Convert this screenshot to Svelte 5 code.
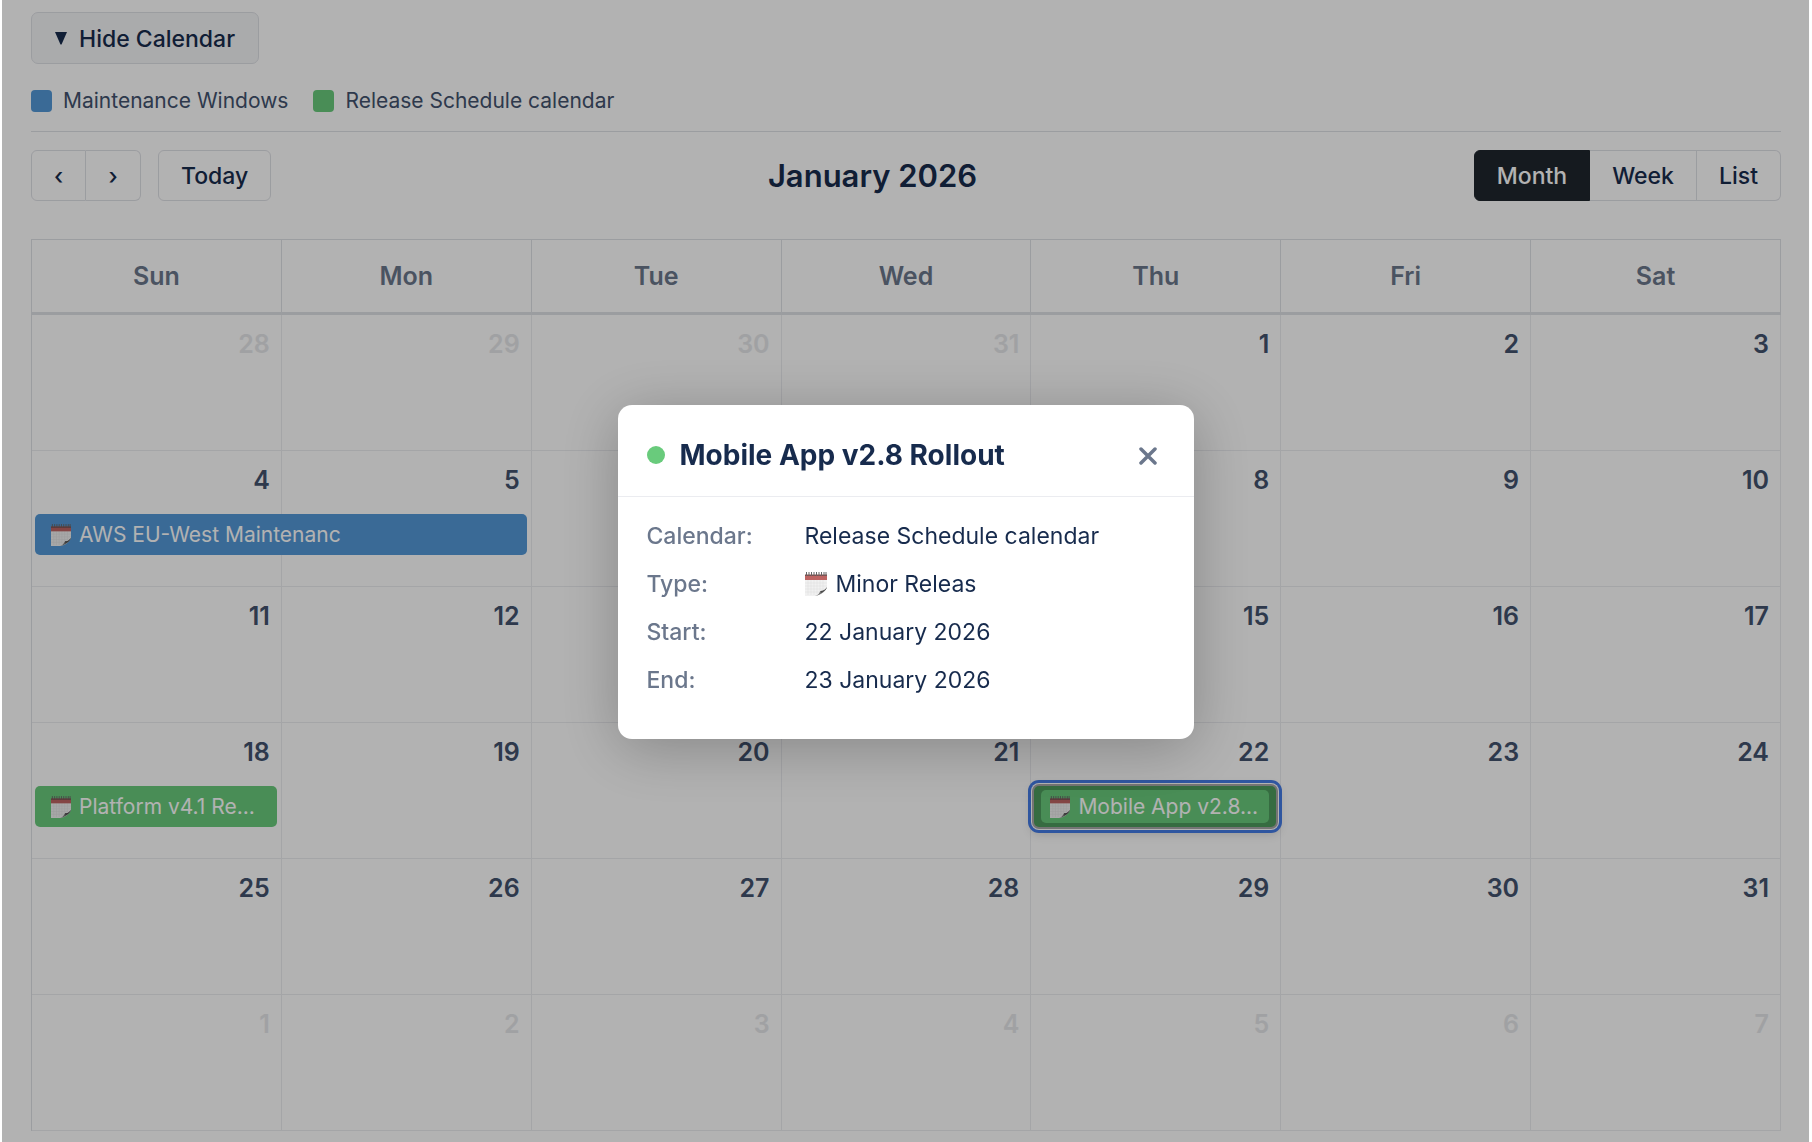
<script>
  const days = ['Sun', 'Mon', 'Tue', 'Wed', 'Thu', 'Fri', 'Sat'];
  const weeks = Array.from({ length: 6 }, (_, w) =>
    Array.from({ length: 7 }, (_, d) => {
      const date = new Date(2025, 11, 28 + w * 7 + d);
      return { n: date.getDate(), other: date.getMonth() !== 0 };
    })
  );
  const events = {
    '1-0': { title: 'AWS EU-West Maintenanc', kind: 'blue wide' },
    '3-0': { title: 'Platform v4.1 Re...', kind: 'green' },
    '3-4': { title: 'Mobile App v2.8...', kind: 'focused' }
  };
  const views = ['Month', 'Week', 'List'];
  const details = [
    ['Calendar:', 'Release Schedule calendar'],
    ['Type:', 'Minor Releas'],
    ['Start:', '22 January 2026'],
    ['End:', '23 January 2026']
  ];
</script>

{#snippet notepad()}
  <svg class="notepad" viewBox="0 0 22 24" aria-hidden="true">
    <path d="M0 3h22v12c-1 4-6 8-11 9H0z" fill="#f1f1f1" />
    <path d="M3 8v15M6 8v15M9 8v15M12 8v14M15 8v12M18 8v10M0 11h22M0 14h22M0 17h19M0 20h16" stroke="#e0e0e0" stroke-width=".6" />
    <path d="M10 24c4-1 4-3 5.500-5 3 0 5-1.500 6.500-4-.5 2-2 4-4 5.500C15.500 22.500 13 23.500 10 24z" fill="#777" />
    <path d="M15.500 19c3 0 5-1.500 6.500-4-1 3-3 4.500-6 6z" fill="#4a4a4a" />
    <path d="M0 3h22v5H0z" fill="#bd6462" />
    <path d="M0 2.500h22v1.500H0z" fill="#844a49" />
    <path d="M1.500 0v4M4 0v4M6.500 0v4M9 0v4M11.500 0v4M14 0v4M16.500 0v4M19 0v4M21 0v4" stroke="#666" stroke-width="1" />
  </svg>
{/snippet}

<main>
  <button class="toggle" type="button">
    <svg class="tri" viewBox="0 0 12 13" aria-hidden="true"><path d="M0 0h12L6.500 12.500h-1z" fill="currentColor" /></svg>
    Hide Calendar
  </button>

  <div class="legend">
    <span class="key"><i class="swatch blue"></i>Maintenance Windows</span>
    <span class="key"><i class="swatch green"></i>Release Schedule calendar</span>
  </div>

  <div class="toolbar">
    <div class="left">
      <div class="group">
        <button class="arrow" type="button" aria-label="Previous month">‹</button>
        <button class="arrow" type="button" aria-label="Next month">›</button>
      </div>
      <div class="group"><button type="button">Today</button></div>
    </div>
    <h1>January 2026</h1>
    <div class="group views">
      {#each views as v, i}
        <button type="button" class:active={i === 0}>{v}</button>
      {/each}
    </div>
  </div>

  <table>
    <thead>
      <tr>{#each days as d}<th scope="col">{d}</th>{/each}</tr>
    </thead>
    <tbody>
      {#each weeks as week, w}
        <tr>
          {#each week as day, d}
            {@const ev = events[`${w}-${d}`]}
            <td>
              <div class="num" class:other={day.other}>{day.n}</div>
              {#if ev}
                <button type="button" class="event {ev.kind}">
                  <span class="inner">{@render notepad()}<span>{ev.title}</span></span>
                </button>
              {/if}
            </td>
          {/each}
        </tr>
      {/each}
    </tbody>
  </table>
</main>

<div class="overlay">
  <div class="dialog" role="dialog" aria-modal="true" aria-labelledby="dialog-title">
    <header>
      <i class="dot"></i>
      <h2 id="dialog-title">Mobile App v2.8 Rollout</h2>
      <button class="close" type="button" aria-label="Close">
        <svg viewBox="0 0 18 18" aria-hidden="true"><path d="M2 2l14 14M16 2L2 16" stroke="currentColor" stroke-width="3.500" stroke-linecap="round" /></svg>
      </button>
    </header>
    <dl>
      {#each details as [label, value], i}
        <dt>{label}</dt>
        <dd>{#if i === 1}{@render notepad()}{/if}{value}</dd>
      {/each}
    </dl>
  </div>
</div>

<style>
  :global(body) {
    background: #fff;
    font-family: Inter, 'Liberation Sans', sans-serif;
    color: #172b4d;
    overflow: hidden;
  }
  main {
    padding: 12px 31px 10px;
  }
  button {
    font: inherit;
    color: inherit;
    margin: 0;
    cursor: pointer;
  }
  .toggle {
    display: flex;
    align-items: center;
    gap: 12px;
    height: 52px;
    padding: 1px 23px 0;
    border: 1px solid #dfe1e6;
    border-radius: 7px;
    background: #f4f5f7;
    font-size: 23px;
    font-weight: 500;
  }
  .tri {
    width: 12px;
    height: 13px;
  }
  .legend {
    display: flex;
    gap: 25px;
    padding: 24px 0 17px;
    border-bottom: 1px solid #dfe1e6;
    font-size: 21px;
    line-height: 26px;
    color: #42526e;
  }
  .key {
    display: flex;
    align-items: center;
    gap: 11px;
  }
  .swatch {
    width: 21px;
    height: 22px;
    border-radius: 4px;
  }
  .blue {
    background: #5398d7;
  }
  .green {
    background: #69cb7c;
  }
  .toolbar {
    display: flex;
    align-items: center;
    justify-content: space-between;
    padding: 18px 0 38px;
  }
  .left {
    display: flex;
    gap: 17px;
  }
  .group {
    display: flex;
  }
  .group button {
    height: 51px;
    padding: 0 22px;
    border: 1px solid #dfe1e6;
    background: #fff;
    font-size: 23px;
    font-weight: 500;
  }
  .group button + button {
    border-left: 0;
  }
  .group button:first-child {
    border-top-left-radius: 6px;
    border-bottom-left-radius: 6px;
  }
  .group button:last-child {
    border-top-right-radius: 6px;
    border-bottom-right-radius: 6px;
  }
  .group .arrow {
    width: 55px;
    padding: 0;
  }
  .group .active {
    background: #1f262d;
    border-color: #1f262d;
    color: #fff;
  }
  h1 {
    margin: 0;
    font-size: 31px;
    line-height: 38px;
    font-weight: 600;
  }
  table {
    width: 100%;
    table-layout: fixed;
    border-collapse: separate;
    border-spacing: 0;
    border-left: 1px solid #dfe1e6;
  }
  th {
    height: 72px;
    padding: 0;
    border-top: 1px solid #dfe1e6;
    border-right: 1px solid #dfe1e6;
    border-bottom: 3px solid #dfe1e6;
    font-size: 25px;
    font-weight: 600;
    color: #6b778c;
  }
  td {
    position: relative;
    height: 135px;
    padding: 0;
    vertical-align: top;
    border-right: 1px solid #ebecf0;
    border-bottom: 1px solid #ebecf0;
  }
  .num {
    padding: 14px 11px 0;
    font-size: 25px;
    line-height: 30px;
    font-weight: 600;
    text-align: right;
    color: #42526e;
  }
  .num.other {
    color: #e6e7ea;
  }
  .event {
    display: block;
    position: absolute;
    z-index: 1;
    top: 63px;
    left: 3px;
    right: 4px;
    height: 41px;
    padding: 4px 7px;
    border: 0;
    border-radius: 5px;
    color: #fff;
    font-size: 21px;
  }
  .event.wide {
    right: calc(-100% + 3px);
  }
  .inner {
    display: flex;
    align-items: center;
    gap: 8px;
    height: 33px;
    padding: 0 9px;
    border-radius: 5px;
    white-space: nowrap;
  }
  .event.focused {
    background: #4e9b5d;
    box-shadow: 0 0 0 2px #a8a8a8, 0 0 0 3px #fff, 0 0 0 6px #447be5, 0 4px 10px 4px #0002;
  }
  .focused .inner {
    background: #69cb7c;
  }
  .notepad {
    flex: none;
    width: 20px;
    height: 22px;
  }
  dd .notepad {
    width: 22px;
    height: 24px;
  }
  .overlay {
    position: fixed;
    inset: 0 3px 0 2px;
    z-index: 5;
    display: flex;
    align-items: center;
    justify-content: center;
    padding-top: 2px;
    background: rgba(0, 0, 0, 0.3);
  }
  .dialog {
    width: 576px;
    border-radius: 14px;
    background: #fff;
    box-shadow: 0 9px 60px rgba(0, 0, 0, 0.25);
  }
  header {
    display: flex;
    align-items: center;
    gap: 15px;
    height: 92px;
    padding: 8px 29px 0;
    box-sizing: border-box;
    border-bottom: 1px solid #ebecf0;
  }
  .dot {
    width: 18px;
    height: 18px;
    border-radius: 50%;
    background: #69cb7c;
  }
  h2 {
    flex: 1;
    margin: 0;
    font-size: 28px;
    line-height: 34px;
    font-weight: 700;
  }
  .close {
    display: flex;
    padding: 10px 8px 8px;
    border: 0;
    background: none;
    color: #6b778c;
  }
  .close svg {
    width: 18px;
    height: 18px;
  }
  dl {
    display: grid;
    grid-template-columns: 158px 1fr;
    row-gap: 18px;
    margin: 0;
    padding: 24px 29px 44px;
    font-size: 23px;
    line-height: 30px;
  }
  dt {
    font-weight: 500;
    color: #6b778c;
  }
  dd {
    display: flex;
    align-items: center;
    gap: 9px;
    margin: 0;
  }
</style>
